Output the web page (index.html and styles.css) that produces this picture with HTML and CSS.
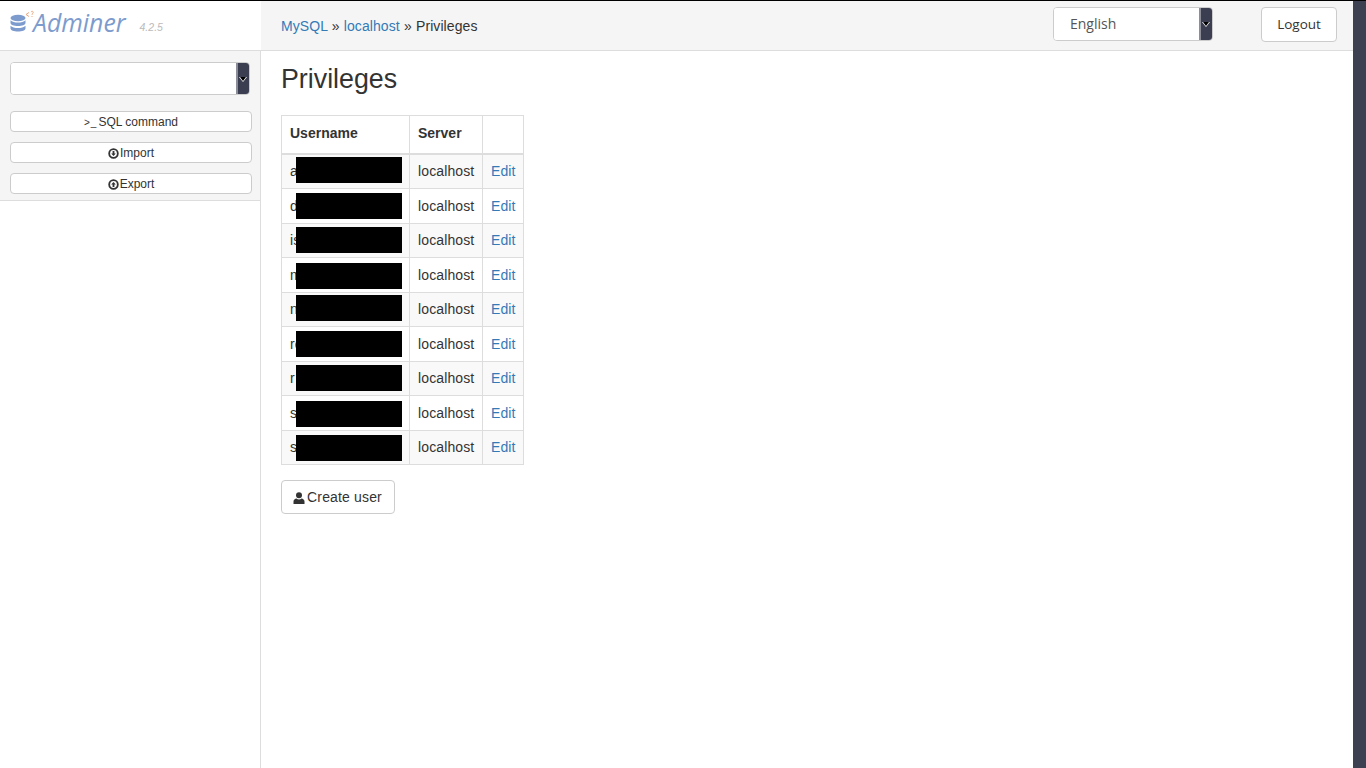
FILE: index.html
```html
<!DOCTYPE html>
<html lang="en">
<head>
  <meta charset="UTF-8">
  <title>Privileges - Adminer</title>
  <link rel="stylesheet" href="styles.css">
</head>
<body>

<div class="page">
  <div class="topbar">
    <div class="logo">
      <svg class="logo-icon" width="24" height="26" viewBox="0 0 24 26">
        <g fill="#7d9bcd">
          <ellipse cx="8" cy="11" rx="7.5" ry="3.2"/>
          <path d="M0.5 13.2c1.5 1.6 4.500 2.300 7.500 2.300s6-.7 7.500-2.300v2.800c0 1.700-3.400 3-7.500 3s-7.500-1.300-7.500-3z"/>
          <path d="M0.500 18.700c1.500 1.600 4.500 2.300 7.500 2.300s6-.7 7.500-2.300v2.800c0 1.700-3.400 3-7.500 3s-7.500-1.300-7.500-3z"/>
        </g>
        <path d="M19 5.500l-3 2 3 2" fill="none" stroke="#f0a77c" stroke-width="1"/>
        <path d="M21 5c1-1.200 2.500-.6 2.200.6-.2.800-1.200 1-1.200 2.200M22 9v1" fill="none" stroke="#f0a77c" stroke-width="1"/>
      </svg>
      <span class="logo-name">Adminer</span>
      <span class="logo-version">4.2.5</span>
    </div>
    <div class="header">
      <div class="breadcrumb">
        <a href="#">MySQL</a> » <a href="#">localhost</a> » Privileges
      </div>
      <div class="select-box lang-select">
        <select>
          <option>English</option>
        </select>
        <span class="select-arrow"></span>
      </div>
      <button class="btn logout">Logout</button>
    </div>
  </div>

  <div class="content">
    <div class="sidebar">
      <div class="sidebar-top">
        <div class="select-box db-select">
          <select>
            <option></option>
          </select>
          <span class="select-arrow"></span>
        </div>
        <button class="side-btn"><span class="prompt">&gt;_</span>SQL command</button>
        <button class="side-btn">
          <svg class="icon" width="11" height="11" viewBox="0 0 12 12">
            <path fill-rule="evenodd" d="M6 .3a5.700 5.700 0 1 0 0 11.400 5.700 5.700 0 0 0 0-11.400zM6 2.300a3.700 3.700 0 1 1 0 7.400 3.700 3.700 0 0 1 0-7.400z"/>
            <path d="M5 3.300h2v2.700h1.500L6 8.800 3.500 6H5z"/>
          </svg>Import
        </button>
        <button class="side-btn">
          <svg class="icon" width="11" height="11" viewBox="0 0 12 12">
            <path fill-rule="evenodd" d="M6 .3a5.700 5.700 0 1 0 0 11.400 5.700 5.700 0 0 0 0-11.400zM6 2.300a3.700 3.700 0 1 1 0 7.400 3.700 3.700 0 0 1 0-7.400z"/>
            <path d="M5 8.700h2V6h1.500L6 3.200 3.500 6H5z"/>
          </svg>Export
        </button>
      </div>
    </div>

    <div class="main">
      <h2>Privileges</h2>
      <table class="users">
        <thead>
          <tr><th class="col-user">Username</th><th class="col-server">Server</th><th class="col-edit"></th></tr>
        </thead>
        <tbody>
          <tr><td>a<span class="redact"></span></td><td>localhost</td><td><a href="#">Edit</a></td></tr>
          <tr><td>d<span class="redact"></span></td><td>localhost</td><td><a href="#">Edit</a></td></tr>
          <tr><td>is<span class="redact"></span></td><td>localhost</td><td><a href="#">Edit</a></td></tr>
          <tr><td>m<span class="redact"></span></td><td>localhost</td><td><a href="#">Edit</a></td></tr>
          <tr><td>n<span class="redact"></span></td><td>localhost</td><td><a href="#">Edit</a></td></tr>
          <tr><td>re<span class="redact"></span></td><td>localhost</td><td><a href="#">Edit</a></td></tr>
          <tr><td>r<span class="redact"></span></td><td>localhost</td><td><a href="#">Edit</a></td></tr>
          <tr><td>s<span class="redact"></span></td><td>localhost</td><td><a href="#">Edit</a></td></tr>
          <tr><td>s<span class="redact"></span></td><td>localhost</td><td><a href="#">Edit</a></td></tr>
        </tbody>
      </table>
      <button class="btn create-user">
        <svg class="icon" width="12" height="12" viewBox="0 0 12 12">
          <circle cx="6" cy="3.300" r="3"/>
          <path d="M0.500 12V9.500C0.500 7.800 2 6.800 3.500 6.500 4.200 7.100 5 7.400 6 7.400s1.800-.3 2.500-.9C10 6.800 11.500 7.800 11.500 9.500V12z"/>
        </svg>Create user
      </button>
    </div>
  </div>
</div>
<div class="scrollbar"></div>

</body>
</html>
```

FILE: styles.css
```css
* {
  box-sizing: border-box;
}
html, body {
  height: 100%;
  margin: 0;
  overflow: hidden;
}
body {
  display: flex;
  border-top: 1px solid #000;
  font-family: "Liberation Sans", sans-serif;
  font-size: 14px;
  line-height: 1.25;
  color: #333;
  background: #fff;
}
a {
  color: #337ab7;
  text-decoration: none;
}
.page {
  flex: 1;
  display: flex;
  flex-direction: column;
  min-width: 0;
}
.scrollbar {
  width: 13px;
  background: #3c4051;
}

/* top row */
.topbar {
  display: flex;
  height: 50px;
  border-bottom: 1px solid #ddd;
}
.logo {
  width: 261px;
  display: flex;
  align-items: flex-start;
  padding: 6px 0 0 10px;
}
.logo-icon {
  flex: none;
}
.logo-name {
  margin: -1px 0 0 -1px;
  font-family: "Open Sans", sans-serif;
  font-style: italic;
  font-weight: 400;
  font-size: 24.8px;
  line-height: 32px;
  color: #7d9bcd;
}
.logo-version {
  margin: 14px 0 0 14px;
  font-size: 10.5px;
  font-style: italic;
  color: #bbb;
}
.header {
  flex: 1;
  display: flex;
  align-items: flex-start;
  background: #f5f5f5;
  padding: 6px 16px 0 20px;
}
.breadcrumb {
  flex: 1;
  padding-top: 11px;
  letter-spacing: .08px;
  word-spacing: .2px;
}

/* selects, with the dark arrow block */
.select-box {
  flex: none;
  display: flex;
  background: #fff;
  border: 1px solid #ccc;
  border-radius: 4px;
  overflow: hidden;
}
.select-box select {
  flex: 1;
  min-width: 0;
  appearance: none;
  border: none;
  outline: none;
  background: #fff;
  color: #555;
  font-family: "Open Sans", sans-serif;
  font-size: 14px;
  padding: 0 16px 2px;
}
.select-arrow {
  position: relative;
  width: 13px;
  background: #3a3e50;
  border-left: 2px solid #8b8d98;
}
.select-arrow::before, .select-arrow::after {
  content: "";
  position: absolute;
  left: 1px;
  top: 50%;
  margin-top: -2px;
  border: 4px solid transparent;
  border-top: 5px solid #fff;
  border-bottom: 0;
}
.select-arrow::after {
  left: 2px;
  border-width: 3px;
  border-top: 4px solid #000;
  border-bottom: 0;
}
.lang-select {
  width: 160px;
  height: 34px;
  margin-right: 48px;
}

/* buttons */
.btn {
  background: #fff;
  border: 1px solid #ccc;
  border-radius: 4px;
  color: #333;
  font-size: 14px;
  line-height: 20px;
  padding: 6px 12px;
}
.logout {
  width: 76px;
  height: 35px;
  font-family: "Open Sans", sans-serif;
  font-size: 13.5px;
  padding: 0 0 2px;
}
.create-user {
  display: block;
  height: 34px;
  width: 114px;
  margin-top: 15px;
  font-family: "Liberation Sans", sans-serif;
  letter-spacing: .15px;
  padding: 0 1px 0 0;
}
.icon {
  fill: #333;
  vertical-align: -2px;
  margin-right: 2px;
}
.side-btn .icon {
  margin-right: 1px;
}

/* left column */
.content {
  flex: 1;
  display: flex;
  min-height: 0;
}
.sidebar {
  width: 261px;
  border-right: 1px solid #ddd;
}
.sidebar-top {
  display: flex;
  flex-direction: column;
  background: #f5f5f5;
  border-bottom: 1px solid #ddd;
  height: 150px;
  padding: 11px 8px 0 10px;
}
.db-select {
  width: 240px;
  height: 33px;
  margin-bottom: 16px;
}
.side-btn {
  flex: none;
  height: 21px;
  margin-bottom: 10px;
  padding: 0;
  background: #fff;
  border: 1px solid #ccc;
  border-radius: 4px;
  color: #333;
  font-family: "Liberation Sans", sans-serif;
  font-size: 12px;
}
.prompt {
  font-size: 10px;
  margin-right: 1px;
  letter-spacing: 1px;
}

/* main column */
.main {
  flex: 1;
  padding: 0 20px;
}
h2 {
  margin: 11px 0 18px;
  font-size: 26.8px;
  font-weight: 400;
  line-height: 35px;
}
.users {
  border-collapse: collapse;
  table-layout: fixed;
  width: 243px;
}
.users th, .users td {
  border: 1px solid #ddd;
  padding: 8.4px 8px 7.6px;
  text-align: left;
  position: relative;
}
.users td {
  letter-spacing: .12px;
}
.users th {
  padding-top: 9px;
  padding-bottom: 10.3px;
  border-bottom-width: 2px;
}
.col-user {
  width: 128px;
}
.col-server {
  width: 73px;
}
.users tbody tr:nth-child(odd) {
  background: #f9f9f9;
}
.redact {
  position: absolute;
  left: 14px;
  top: 2px;
  width: 106px;
  height: 26px;
  background: #000;
}
.users tr:nth-child(4n+2) .redact {
  top: 4px;
}
.users tr:nth-child(4n+3) .redact {
  top: 3px;
}
.users tr:nth-child(4n) .redact {
  top: 5px;
}
.users tr:nth-child(9) .redact {
  top: 4px;
}
```
